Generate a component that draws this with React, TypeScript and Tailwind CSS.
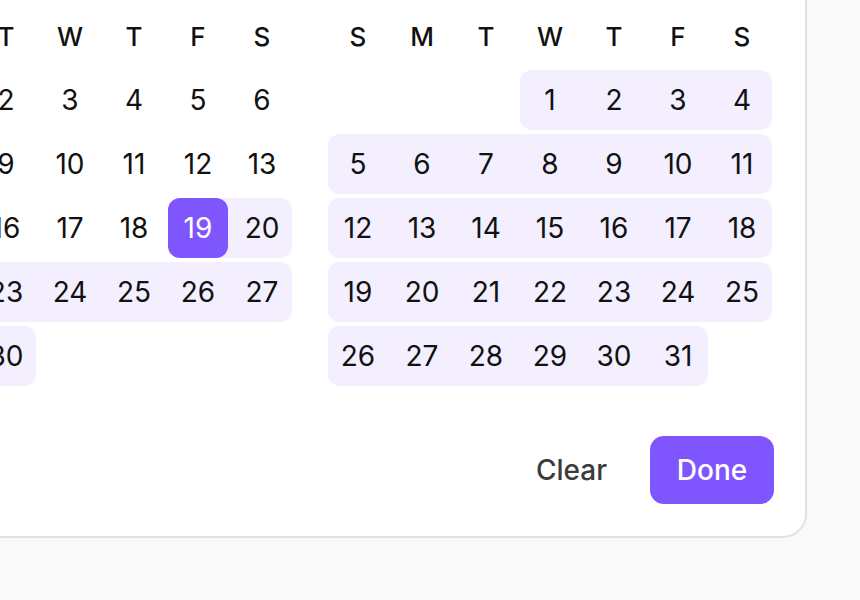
import React from 'react';

type Month = { title: string; offset: number; days: number; rangeFrom: number };

const colStart = ['col-start-1', 'col-start-2', 'col-start-3', 'col-start-4', 'col-start-5', 'col-start-6', 'col-start-7'];
const colEnd = ['col-end-2', 'col-end-3', 'col-end-4', 'col-end-5', 'col-end-6', 'col-end-7', 'col-end-8'];

const weekdays = ['S', 'M', 'T', 'W', 'T', 'F', 'S'];
const selected = { month: 'September 2025', day: 19 };

function weeksOf(m: Month) {
  const cells: (number | null)[] = [];
  for (let i = 0; i < m.offset; i++) cells.push(null);
  for (let d = 1; d <= m.days; d++) cells.push(d);
  const weeks: (number | null)[][] = [];
  for (let i = 0; i < cells.length; i += 7) weeks.push(cells.slice(i, i + 7));
  return weeks;
}

function Calendar({ month }: { month: Month }) {
  const weeks = weeksOf(month);
  return (
    <div className="w-[444px] flex flex-col">
      {/* month title, scrolled off the top */}
      <div className="h-[40px] mb-[16px] flex items-center justify-center text-[28px] font-semibold text-[#111]">
        {month.title}
      </div>
      <div className="flex flex-col gap-1">
        <div className="grid grid-cols-[repeat(7,60px)] gap-x-1 h-[60px]">
          {weekdays.map((w, i) => (
            <div key={i} className="flex items-center justify-center text-[26px] font-medium text-[#111]">
              {w}
            </div>
          ))}
        </div>
        {weeks.map((week, wi) => {
          const inRange = week
            .map((d, i) => (d !== null && d >= month.rangeFrom ? i : -1))
            .filter((i) => i >= 0);
          const first = inRange[0];
          const last = inRange[inRange.length - 1];
          return (
            <div key={wi} className="grid grid-cols-[repeat(7,60px)] gap-x-1 h-[60px]">
              {inRange.length > 0 && (
                <div className={`row-start-1 ${colStart[first]} ${colEnd[last]} bg-[#f3effe] rounded-xl`} />
              )}
              {week.map((d, i) => {
                if (d === null) return null;
                const isSel = month.title === selected.month && d === selected.day;
                return (
                  <div
                    key={i}
                    className={`row-start-1 ${colStart[i]} flex items-center justify-center text-[28px] rounded-xl ${
                      isSel ? 'bg-[#7f56fe] text-white' : 'text-[#111]'
                    }`}
                  >
                    {d}
                  </div>
                );
              })}
            </div>
          );
        })}
      </div>
    </div>
  );
}

export default function App() {
  const months: Month[] = [
    { title: 'September 2025', offset: 1, days: 30, rangeFrom: 19 },
    { title: 'October 2025', offset: 3, days: 31, rangeFrom: 1 },
  ];

  return (
    <div
      className="h-[600px] w-[860px] overflow-hidden bg-[#f9f9f9]"
      style={{ fontFamily: 'Inter, "Noto Sans", sans-serif' }}
    >
      <div className="w-fit ml-[-184px] mt-[-82px] bg-white border-2 border-[#e2e2e2] rounded-[24px] pt-[30px] pl-[30px] pr-[31px] pb-[32px]">
        <div className="flex gap-[36px] pr-[2px]">
          {months.map((m) => (
            <Calendar key={m.title} month={m} />
          ))}
        </div>
        <div className="mt-[50px] flex justify-end items-center gap-[19px]">
          <button className="h-[68px] px-6 text-[28px] font-medium text-[#3b3b3b]">Clear</button>
          <button className="h-[68px] w-[124px] rounded-[14px] bg-[#7f56fe] text-[28px] font-medium text-white">
            Done
          </button>
        </div>
      </div>
    </div>
  );
}
